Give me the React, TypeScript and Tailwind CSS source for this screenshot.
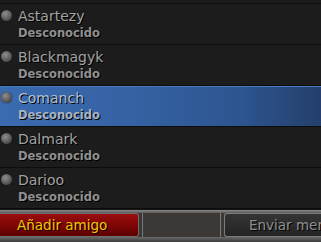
const friends = [
  { name: 'Astartezy', status: 'Desconocido' },
  { name: 'Blackmagyk', status: 'Desconocido' },
  { name: 'Comanch', status: 'Desconocido', selected: true },
  { name: 'Dalmark', status: 'Desconocido' },
  { name: 'Darioo', status: 'Desconocido' },
]

function StatusDot() {
  return (
    <div className="mt-[6px] h-[11px] w-[11px] shrink-0 rounded-full bg-[radial-gradient(circle_at_40%_35%,#8e8e8e,#565656_60%,#2e2e2e)] shadow-[0_0_1px_#000]" />
  )
}

function FriendRow({ name, status, selected }: { name: string; status: string; selected?: boolean }) {
  return (
    <div className="border-t border-[#0c0c0c]">
      <div
        className={
          selected
            ? 'flex h-[40px] gap-[6px] pl-[1px] bg-[linear-gradient(90deg,#3a6bb0_0%,#3562a3_40%,#2d5590_75%,#243f6b_100%)] shadow-[inset_0_1px_0_#4a7cc0]'
            : 'flex h-[40px] gap-[6px] pl-[1px] bg-[#1c1c1c]'
        }
      >
        <StatusDot />
        <div className="flex flex-col pt-[3px]">
          <span
            className={
              selected
                ? 'text-[14px] leading-[18px] text-[#b2bfd2] [text-shadow:1px_1px_0_#000]'
                : 'text-[14px] leading-[18px] text-[#a2a2a2] [text-shadow:1px_1px_0_#000]'
            }
          >
            {name}
          </span>
          <span
            className={
              selected
                ? 'text-[11.5px] font-semibold leading-[16px] text-[#aab4c4] [text-shadow:1px_1px_0_#000]'
                : 'text-[11.5px] font-semibold leading-[16px] text-[#909090] [text-shadow:1px_1px_0_#000]'
            }
          >
            {status}
          </span>
        </div>
      </div>
    </div>
  )
}

export default function App() {
  return (
    <div
      className="flex h-[242px] w-[321px] flex-col overflow-hidden bg-[#1a1a1a]"
      style={{ fontFamily: '"DejaVu Sans", "Liberation Sans", sans-serif' }}
    >
      <div className="h-[3px] bg-[#1c1c1c]" />
      {friends.map((f) => (
        <FriendRow key={f.name} {...f} />
      ))}
      <div className="h-[2px] border-t border-[#0c0c0c] bg-[#141414]" />

      {/* Bottom buttons */}
      <div className="flex h-[32px] flex-col bg-[#3a3734]">
        <div className="h-[3px] bg-[linear-gradient(180deg,#8a8a8a,#5a5a5a)]" />
        <div className="flex h-[24px]">
          <button className="flex w-[139px] items-center rounded-r-[3px] border border-l-0 border-[#6e6e6e] bg-[linear-gradient(180deg,#9a0c0c,#7a0404_60%,#5a0000)] pl-[17px] text-[13.5px] text-[#f2c600] [text-shadow:1px_1px_0_#000]">
            Añadir amigo
          </button>
          <div className="mx-[3px] flex-1 border-x border-[#7a7a7a] bg-[#3b3835]" />
          <button className="flex w-[97px] items-center overflow-hidden whitespace-nowrap rounded-l-[3px] border border-r-0 border-[#7a7a7a] bg-[linear-gradient(180deg,#343434,#242424)] pl-[24px] text-[13.5px] text-[#8f8f8f] [text-shadow:1px_1px_0_#000]">
            Enviar mensaje
          </button>
        </div>
        <div className="h-[5px] bg-[linear-gradient(180deg,#6a6a6a,#3a3a3a)]" />
      </div>
    </div>
  )
}
